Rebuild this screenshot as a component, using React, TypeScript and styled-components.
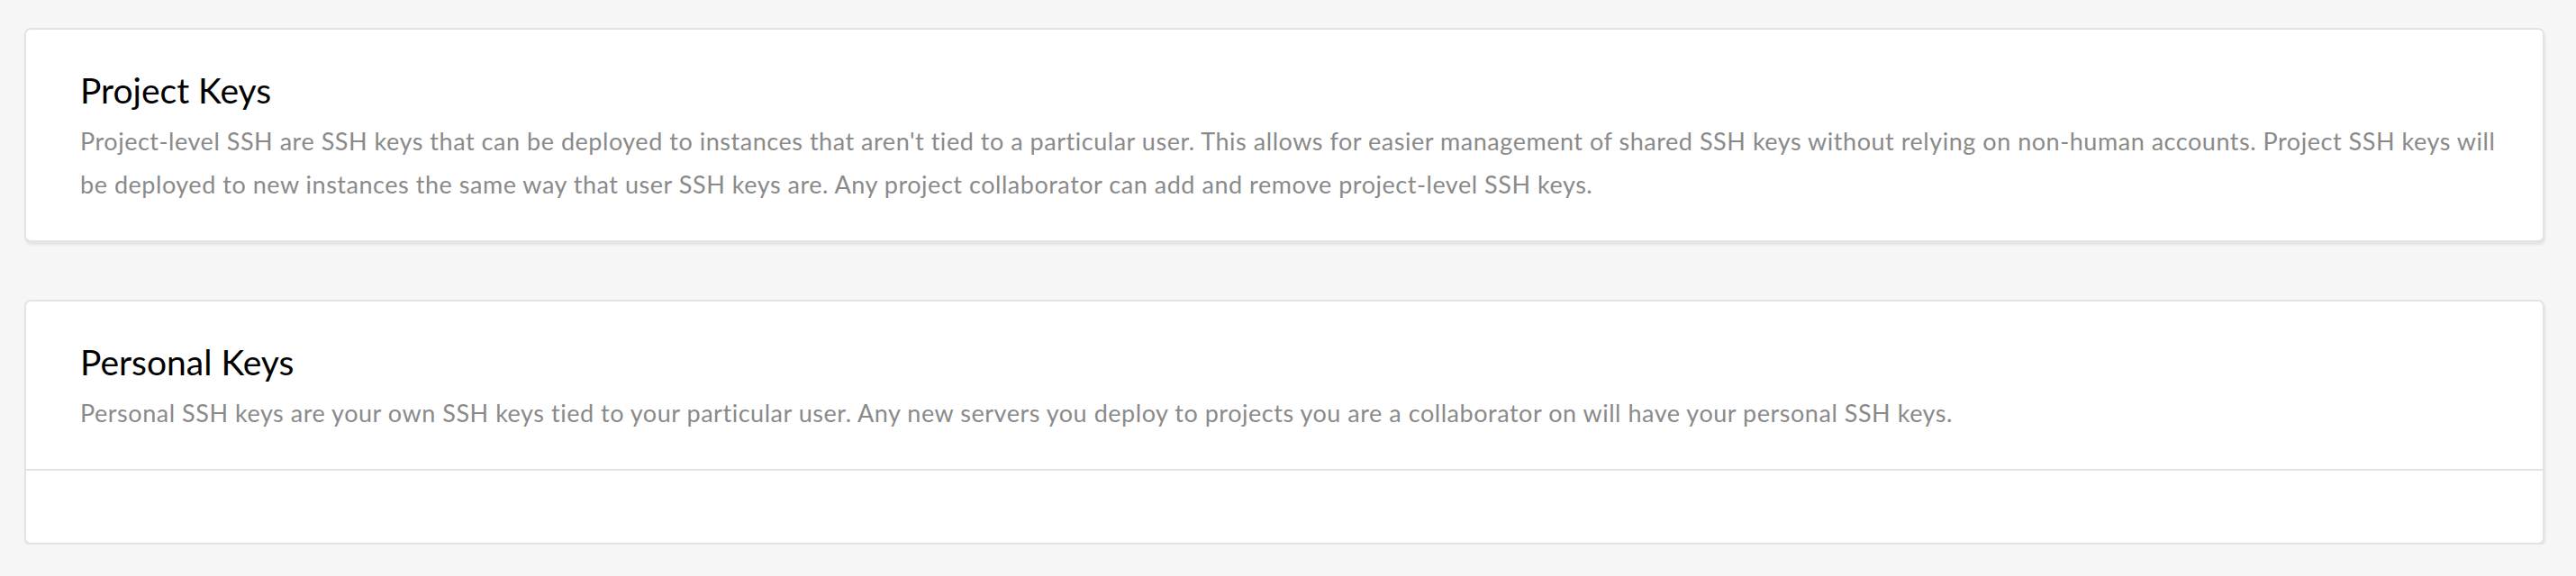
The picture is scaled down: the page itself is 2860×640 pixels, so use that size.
import React from "react";
import styled, { createGlobalStyle } from "styled-components";

const GlobalStyle = createGlobalStyle`
  html, body {
    margin: 0;
    padding: 0;
    background: #f6f6f6;
  }
  body {
    font-family: Lato, "Noto Sans", "Liberation Sans", sans-serif;
  }
`;

const Page = styled.main`
  display: flex;
  flex-direction: column;
  gap: 64px;
  padding: 31px 35px 0 27px;
`;

const Card = styled.section`
  background: #ffffff;
  border: 2px solid #e3e3e3;
  border-radius: 7px;
  box-shadow: 1px 3px 3px rgba(0, 0, 0, 0.08);
  display: flex;
  flex-direction: column;
`;

const CardHeader = styled.header`
  padding: 44px 40px 38px 60px;
`;

const Title = styled.h2`
  margin: 0;
  font-family: Lato, "Noto Sans", sans-serif;
  font-weight: 400;
  font-size: 39px;
  line-height: 46px;
  color: #000000;
`;

const Description = styled.p`
  margin: 10px 0 0;
  font-family: Lato, "Noto Sans", sans-serif;
  font-weight: 400;
  font-size: 27px;
  letter-spacing: 0.53px;
  line-height: 48px;
  color: #8a8a8a;
`;

const CardBody = styled.div`
  border-top: 2px solid #e3e3e3;
  height: 80px;
`;

export default function App() {
  return (
    <>
      <GlobalStyle />
      <Page>
        <Card>
          <CardHeader>
            <Title>Project Keys</Title>
            <Description>
              Project-level SSH are SSH keys that can be deployed to instances that aren't tied to a
              particular user. This allows for easier management of shared SSH keys without relying on
              non-human accounts. Project SSH keys will be deployed to new instances the same way that
              user SSH keys are. Any project collaborator can add and remove project-level SSH keys.
            </Description>
          </CardHeader>
        </Card>
        <Card>
          <CardHeader>
            <Title>Personal Keys</Title>
            <Description>
              Personal SSH keys are your own SSH keys tied to your particular user. Any new servers you
              deploy to projects you are a collaborator on will have your personal SSH keys.
            </Description>
          </CardHeader>
          <CardBody />
        </Card>
      </Page>
    </>
  );
}
